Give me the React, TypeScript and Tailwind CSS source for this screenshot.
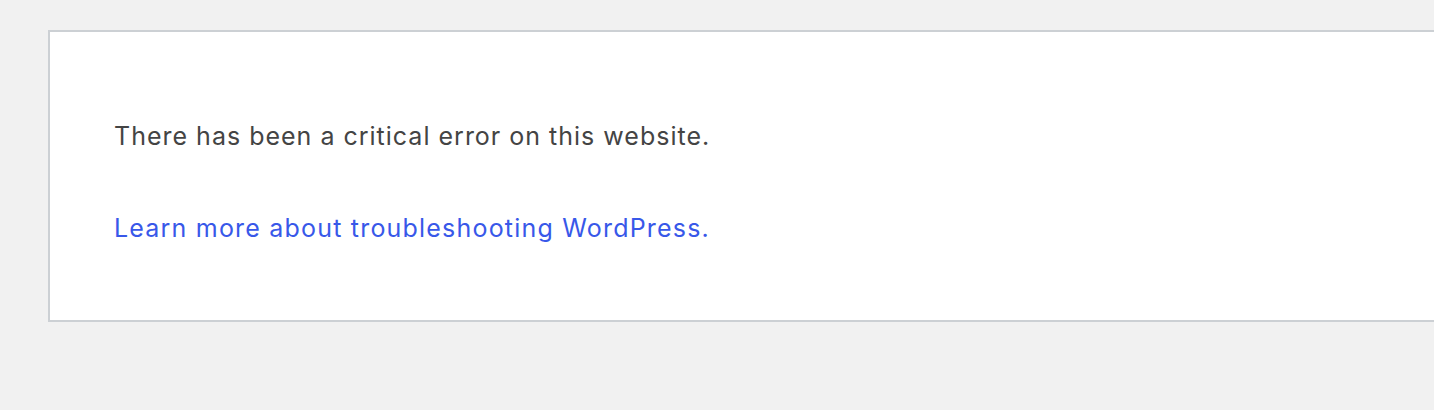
import React from 'react';

export default function App() {
  return (
    <div className="min-h-[410px] w-full overflow-hidden bg-[#f1f1f1] pt-[30px] font-['Inter','Noto_Sans',sans-serif]">
      <div className="ml-[48px] w-[1420px] border-2 border-[#ccd0d4] bg-white pl-[64px] pt-[86px] pb-[74px] text-[25px] leading-[36px] tracking-[1px] text-[#444]">
        <p>There has been a critical error on this website.</p>
        <p className="mt-[56px]">
          <a href="#" className="tracking-[1.2px] text-[#3858e9]">
            Learn more about troubleshooting WordPress.
          </a>
        </p>
      </div>
    </div>
  );
}
